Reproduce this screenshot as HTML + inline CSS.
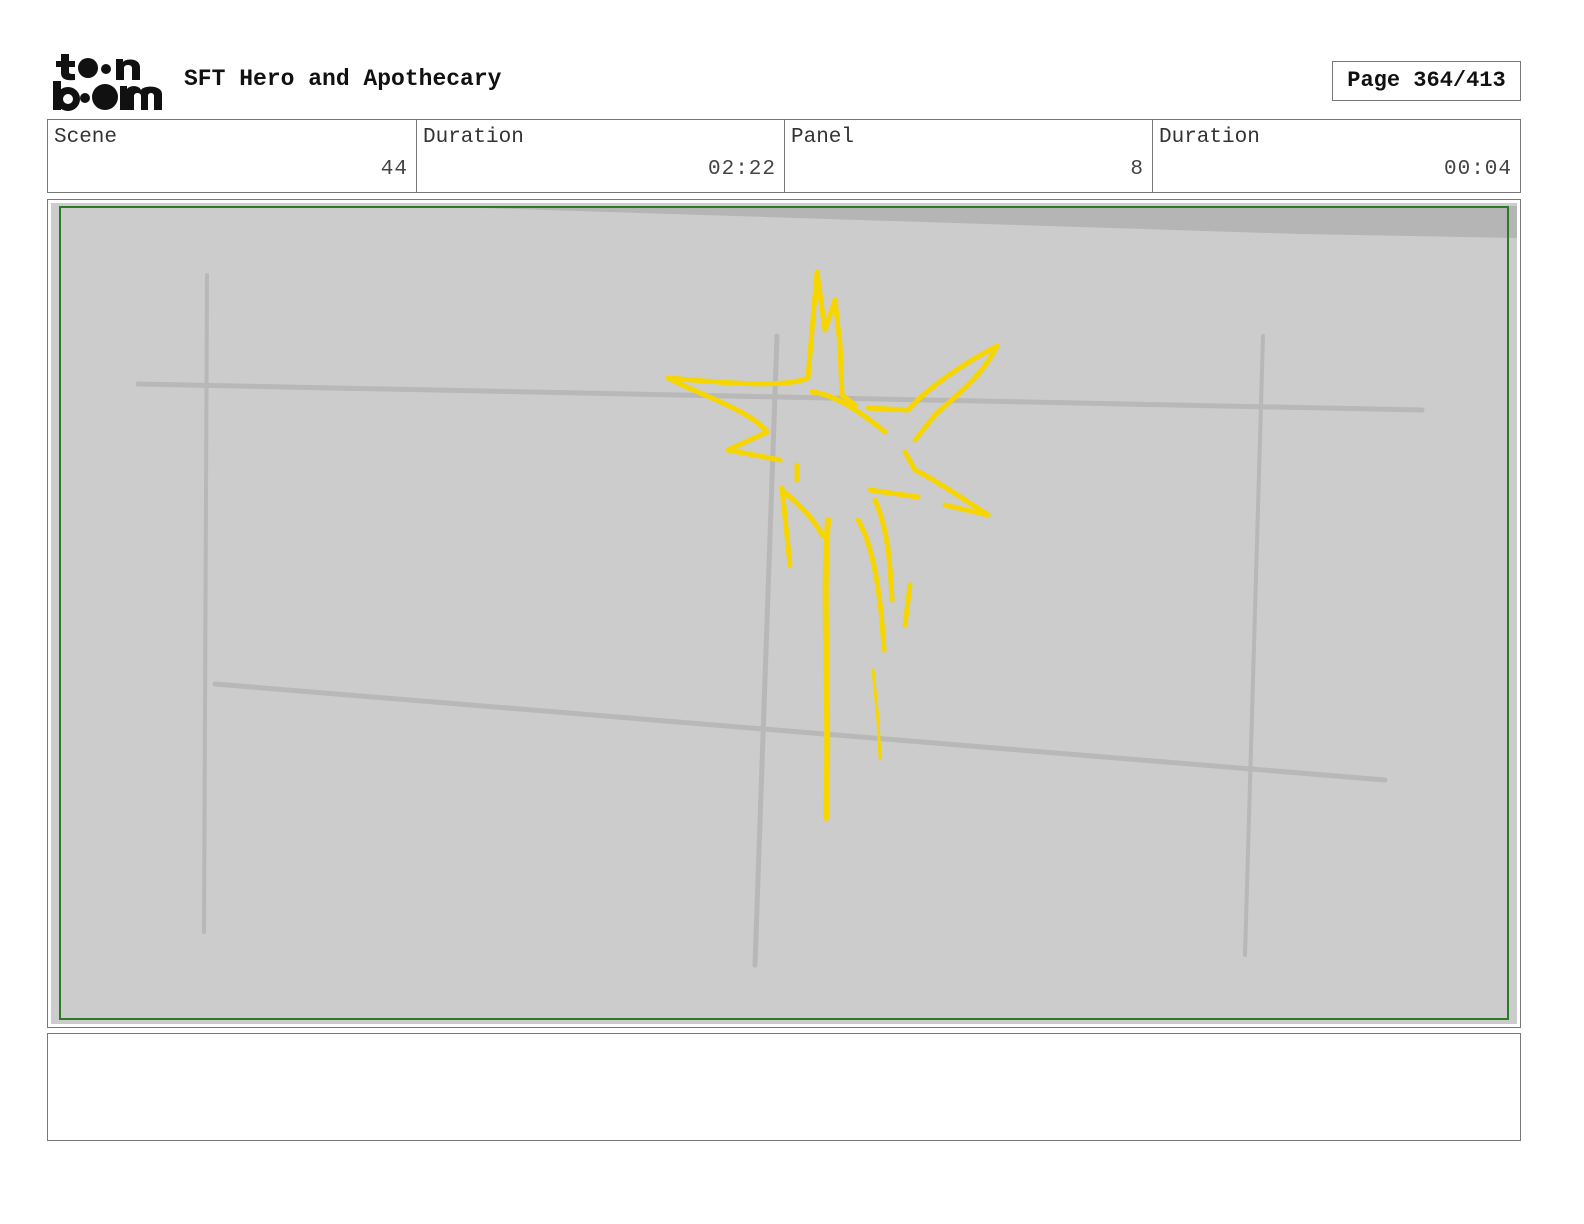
<!DOCTYPE html>
<html><head><meta charset="utf-8"><style>
body{margin:0;width:1584px;height:1224px;background:#fff;position:relative;overflow:hidden;font-family:"Liberation Mono",monospace}
.a{position:absolute}
.cell{position:absolute;top:119px;height:74px;border:1px solid #777;box-sizing:border-box}
.lab{position:absolute;left:6px;top:6px;font-size:21px;color:#333}
.val{position:absolute;right:8px;top:38px;font-size:21px;color:#444;letter-spacing:1px}
</style></head><body>
<svg class="a" style="left:50px;top:50px" width="114" height="62" viewBox="0 0 114 62">
<g fill="#111">
<path d="M11 4h8v7h6v6h-6v5c0 2 2 2 6 2v6c-9 1-14-1-14-7v-6H6v-6h5z"/>
<circle cx="38" cy="18" r="10"/><circle cx="56" cy="19" r="5"/>
<path d="M66 30V9h7v3c3-4 17-4 17 5v13h-8V18c0-4-8-4-8 0v12z"/>
<rect x="3" y="31" width="8" height="29"/><circle cx="18" cy="49" r="8.5" fill="none" stroke="#111" stroke-width="7"/>
<circle cx="35" cy="48" r="5"/><circle cx="55" cy="47" r="13"/>
<path d="M70 60V36h7v3c3-4 12-4 14 1c3-5 21-5 21 4v16h-8V46c0-4-6-4-6 0v14h-7V46c0-4-7-4-7 0v14z"/>
</g></svg>
<div class="a" style="left:184px;top:66px;font-size:23px;font-weight:bold;color:#111">SFT Hero and Apothecary</div>
<div class="a" style="left:1332px;top:61px;width:189px;height:40px;border:1px solid #777;box-sizing:border-box;font-size:22px;font-weight:bold;line-height:38px;text-align:center;color:#111">Page 364/413</div>
<div class="cell" style="left:47px;width:370px"><div class="lab">Scene</div><div class="val">44</div></div>
<div class="cell" style="left:416px;width:369px"><div class="lab">Duration</div><div class="val">02:22</div></div>
<div class="cell" style="left:784px;width:369px"><div class="lab">Panel</div><div class="val">8</div></div>
<div class="cell" style="left:1152px;width:369px"><div class="lab">Duration</div><div class="val">00:04</div></div>
<div class="a" style="left:47px;top:199px;width:1474px;height:829px;border:1px solid #777;box-sizing:border-box"></div>
<svg class="a" style="left:51px;top:203px" width="1466" height="821" viewBox="51 203 1466 821">
<rect x="51" y="203" width="1466" height="821" fill="#cbcccb"/>
<polygon points="420,206 1517,206 1517,238 1300,234" fill="#b4b5b4"/>
<g stroke="#b7b8b7" fill="none" stroke-linecap="round">
<path d="M138 384 L1422 410" stroke-width="5"/>
<path d="M215 684 L1385 780" stroke-width="5"/>
<path d="M207 275 L204 932" stroke-width="4"/>
<path d="M777 336 L755 965" stroke-width="5"/>
<path d="M1263 336 L1245 955" stroke-width="4"/>
</g>
<rect x="60" y="207" width="1448" height="812" fill="none" stroke="#2a7a2a" stroke-width="2"/>
<g stroke="#f7d600" fill="none" stroke-width="5" stroke-linecap="round" stroke-linejoin="round">
<path d="M668 378 C700 380 780 390 808 378 L812 330 L817 272 L825 330 L835 300 L840 345 L842 395 L855 405"/>
<path d="M668 378 C700 395 750 410 767 432 L728 450 L780 460"/>
<path d="M812 392 C840 395 870 420 885 432"/>
<path d="M868 408 L908 410 C930 385 970 360 997 346 C980 380 950 400 935 415 L915 440"/>
<path d="M905 452 L915 470 C935 480 965 500 988 515 L945 505"/>
<path d="M870 490 L918 497"/>
<path d="M782 488 L790 565"/><path d="M797 465 L797 480"/>
<path d="M782 490 C800 505 815 520 822 535"/>
<path d="M828 520 C822 600 830 700 826 818" stroke-width="6"/>
<path d="M858 520 C870 540 880 580 884 650"/>
<path d="M875 500 C888 530 890 560 892 600"/>
<path d="M910 585 L905 625"/>
<path d="M873 670 L878 720 M878 720 L880 758" stroke-width="3"/>
</g>
</svg>
<div class="a" style="left:47px;top:1033px;width:1474px;height:108px;border:1px solid #777;box-sizing:border-box"></div>
</body></html>
